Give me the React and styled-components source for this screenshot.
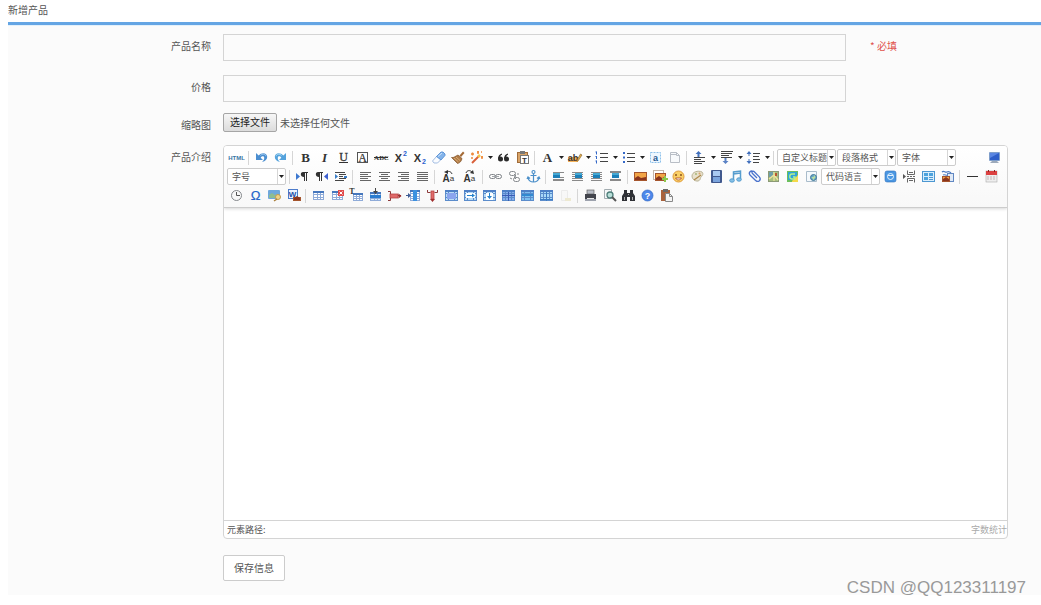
import React from "react";
import styled, { createGlobalStyle } from "styled-components";

const GlobalStyle = createGlobalStyle`
  * { box-sizing: border-box; }
  body {
    margin: 0;
    background: #fff;
    color: #555;
    font: 10px/16px "Noto Sans CJK SC", "Liberation Sans", sans-serif;
  }
  button, input, select, textarea { font: inherit; color: inherit; }
`;

const Page = styled.main`
  padding: 0 0 11px 8px;
`;

const Title = styled.h1`
  margin: 0;
  height: 22px;
  padding-top: 2px;
  font-size: 10px;
  font-weight: 400;
  line-height: 16px;
`;

const Panel = styled.form`
  position: relative;
  padding: 9px 33px 14px 0;
  background: #fbfbfb;
  border-top: 3px solid #64a5e4;
  box-shadow: inset 0 1px 0 #e3f1fb;
`;

const Row = styled.div`
  display: grid;
  grid-template-columns: 203px minmax(0, 1fr) 138px;
  column-gap: 12px;
  margin-bottom: ${(p) => p.$gap ?? 14}px;
`;

const Label = styled.label`
  padding-top: 4px;
  text-align: right;
`;

const TextInput = styled.input`
  width: 100%;
  height: 27px;
  padding: 0 6px;
  background: #fbfbfb;
  border: 1px solid #d4d4d4;
`;

const Required = styled.span`
  padding-top: 4px;
  color: #e0524c;
`;

const FieldCell = styled.div`
  margin-right: 12px;
`;

const FilePicker = styled.div`
  display: flex;
  align-items: center;
  gap: 3px;
  height: 19px;
`;

const HiddenFile = styled.input`
  position: absolute;
  width: 1px;
  height: 1px;
  opacity: 0;
`;

const FileButton = styled.label`
  width: 54px;
  height: 19px;
  border: 1px solid #a5a5a5;
  border-radius: 2px;
  background: linear-gradient(#f6f6f6, #dcdcdc);
  color: #222;
  line-height: 16px;
  text-align: center;
`;

const Editor = styled.section`
  grid-column: 2 / 4;
  overflow: hidden;
  border: 1px solid #d4d4d4;
  border-radius: 4px;
  background: #fff;
`;

const Toolbar = styled.div`
  padding: 2px 3px;
  border-bottom: 1px solid #ccc;
  background: linear-gradient(#fff, #f8f8f8);
  box-shadow: 0 1px 3px rgba(0, 0, 0, 0.16);
`;

const ToolRow = styled.div`
  display: flex;
  align-items: center;
  height: 19px;
`;

const ToolButton = styled.button`
  flex: none;
  display: flex;
  justify-content: center;
  align-items: center;
  width: ${(p) => (p.$wide ? 21 : 19)}px;
  height: 19px;
  padding: 0;
  border: 0;
  background: none;
  opacity: ${(p) => (p.disabled ? 0.6 : 1)};
  margin-left: ${(p) => (p.$end ? "auto" : 0)};
`;

const MenuArrow = styled.button`
  flex: none;
  display: flex;
  justify-content: center;
  align-items: center;
  width: 8px;
  height: 19px;
  padding: 0;
  border: 0;
  background: none;
`;

const Separator = styled.span`
  flex: none;
  width: 1px;
  height: 14px;
  margin: 0 3px 0 2px;
  background: #d6d6d6;
`;

const Combo = styled.span`
  flex: none;
  display: flex;
  width: 59px;
  height: 17px;
  margin-right: 1px;
  border: 1px solid #ccc;
  border-radius: 2px;
  background: #fff;
`;

const ComboSelect = styled.select`
  appearance: none;
  flex: 1;
  min-width: 0;
  padding: 0 0 0 4px;
  border: 0;
  background: none;
  font-size: 9px;
  line-height: 14px;
`;

const ComboArrow = styled.span`
  display: flex;
  justify-content: center;
  align-items: center;
  width: 8px;
  border-left: 1px solid #d6d6d6;
  pointer-events: none;
`;

const Content = styled.textarea`
  display: block;
  width: 100%;
  height: 312px;
  padding: 8px;
  border: 0;
  background: transparent;
  resize: none;
`;

const StatusBar = styled.div`
  display: flex;
  justify-content: space-between;
  height: 18px;
  padding: 0 0 0 3px;
  border-top: 1px solid #d4d4d4;
  font-size: 9px;
  line-height: 17px;
`;

const WordCount = styled.span`
  color: #aaa;
`;

const SaveButton = styled.button`
  grid-column: 2;
  justify-self: start;
  width: 62px;
  height: 26px;
  padding: 0;
  border: 1px solid #ccc;
  border-radius: 2px;
  background: #fff;
`;

const Watermark = styled.span`
  position: absolute;
  right: 15px;
  bottom: -3px;
  color: #999;
  font: 17px/20px "Liberation Sans", sans-serif;
`;

/* ---------- icon building blocks ---------- */

const Svg = styled.svg`
  display: block;
  width: 17px;
  height: 17px;
`;

const Caret = () => (
  <svg width="5" height="3" viewBox="0 0 5 3" aria-hidden="true">
    <path d="M0 0h5L2.5 3z" fill="#222" />
  </svg>
);

const Glyph = ({ x = 8.5, y = 13, size = 12, serif, children, ...rest }) => (
  <text
    x={x}
    y={y}
    fontSize={size}
    textAnchor="middle"
    fill="#333"
    fontWeight="700"
    fontFamily={serif ? "Liberation Serif, serif" : "Liberation Sans, sans-serif"}
    {...rest}
  >
    {children}
  </text>
);

const Bars = ({ list, color = "#666" }) =>
  list.map(([x, y, w], i) => <rect key={i} x={x} y={y} width={w} height="1" fill={color} />);

const Table = ({ x = 3, y = 4, w = 11, h = 9, v = [4, 7], r = [3, 6], fill = "#fff", line = "#8fabd8", head = "#4677bd" }) => (
  <g>
    <rect x={x + 0.5} y={y + 0.5} width={w - 1} height={h - 1} fill={fill} stroke={line} />
    {v.map((i) => <rect key={"v" + i} x={x + i} y={y} width="1" height={h} fill={line} />)}
    {r.map((i) => <rect key={"r" + i} x={x} y={y + i} width={w} height="1" fill={line} />)}
    <rect x={x} y={y} width={w} height="2" fill={head} />
  </g>
);

const BlueTable = ({ children, fill = "#b9dcf5" }) => (
  <g>
    <Table x={2} y={3} w={13} h={11} v={[3, 9]} r={[3, 7]} fill={fill} line="#5b8ccb" head="#4d7fc6" />
    {children}
  </g>
);

const Photo = ({ x, y, w, h }) => (
  <g>
    <rect x={x} y={y} width={w} height={h} fill="#a5552d" />
    <rect x={x + 1} y={y + 1} width={w - 2} height={h - 2} fill="#f2a547" />
    <path d={`M${x + 1} ${y + h - 1}v-2l3-2 3 2 ${w - 8}-1v3z`} fill="#8a341d" />
  </g>
);

const Wrap = ({ x, lines }) => (
  <g>
    <Bars list={lines} color="#8a8a8a" />
    <rect x={x} y="5" width="7" height="5" fill="#1c7fb8" />
    <rect x={x} y="5" width="7" height="2" fill="#45a9d4" />
  </g>
);

const icons = {
  html: <Glyph y={10.5} size={6} fill="#3875a5">HTML</Glyph>,
  undo: (
    <g>
      <path d="M3 4v7h7L7.700 8.800C9 6.800 11 7 11.200 8.800c.2 1.700-.8 3-2.200 4.200 3.500-.6 5.300-2.800 5.200-5.300C14 4 9 2.500 5.700 6.600z" fill="#4a8ed0" />
      <path d="M7.500 6.500c2-2.200 5-1.600 5.400.7" fill="none" stroke="#a4cdf0" />
    </g>
  ),
  redo: (
    <g>
      <path d="M14 4v7H7l2.300-2.200C8 6.800 6 7 5.800 8.800c-.2 1.700.8 3 2.200 4.200-3.500-.6-5.300-2.800-5.200-5.300C3 4 8 2.500 11.300 6.600z" fill="#54a2dc" />
      <path d="M9.500 6.500c-2-2.200-5-1.600-5.400.7" fill="none" stroke="#b4e0f6" />
    </g>
  ),
  bold: <Glyph serif size={13}>B</Glyph>,
  italic: <Glyph serif size={13} fontStyle="italic">I</Glyph>,
  underline: (
    <g>
      <Glyph serif size={12} y={12} fontWeight="400" stroke="#333" strokeWidth=".3">U</Glyph>
      <rect x="4" y="13" width="9" height="1" fill="#333" />
    </g>
  ),
  fontborder: (
    <g>
      <rect x="3.500" y="3.500" width="10" height="10" fill="none" stroke="#555" />
      <Glyph serif y={12.500} size={12} fontWeight="400" stroke="#333" strokeWidth=".2">A</Glyph>
    </g>
  ),
  strike: (
    <g>
      <Glyph serif size={7} y={11}>ABC</Glyph>
      <rect x="1" y="8" width="14" height="1" fill="#333" />
    </g>
  ),
  sup: (
    <g>
      <Glyph x={6.500} size={11}>X</Glyph>
      <Glyph x={13} y={7} size={7} fill="#2a5fd0">2</Glyph>
    </g>
  ),
  sub: (
    <g>
      <Glyph x={6.500} size={11}>X</Glyph>
      <Glyph x={13} y={15} size={7} fill="#2a5fd0">2</Glyph>
    </g>
  ),
  eraser: (
    <g>
      <path d="M2.500 12L7 7l4 3.500L7.500 14H4z" fill="#fafcff" stroke="#a3bde2" />
      <path d="M6.500 7.500L11 3h2l2 2v1.500L11 11z" fill="#84b4ea" stroke="#4a86d0" strokeWidth=".8" />
      <path d="M8 7.500L12 4" stroke="#cfe4fa" />
    </g>
  ),
  brush: (
    <g>
      <path d="M10.500 6.500L14 2.500l1.500 1.500-3.500 4z" fill="#a46a36" />
      <path d="M2.500 8.500c2.500.5 4-1.500 6.500-2.500l4 3.500c-.5 2.500-2 4.500-4.500 5z" fill="#b07a45" stroke="#80512a" strokeWidth=".7" />
      <path d="M5 9l4.500 4M7 8l4 3.500" stroke="#e3bb86" strokeWidth=".8" />
    </g>
  ),
  autotype: (
    <g>
      <path d="M4 14l7-7" stroke="#d9603a" strokeWidth="2" />
      <path d="M10 8l2-2" stroke="#f4c64a" strokeWidth="2.500" />
      <path d="M3 5h3M4.500 3.500v3M9 3h2M10 2v3M13 8h2M14 7v3M13 3h1M3 9h2" stroke="#ee8a3c" strokeWidth="1.500" />
    </g>
  ),
  quote: (
    <g fill="#2c2c2c">
      <circle cx="5.500" cy="10" r="2.500" />
      <circle cx="11.500" cy="10" r="2.500" />
      <path d="M3 10c0-3 1.500-5 4-5.500v1.200C5.500 6.300 5 7.300 5 9zM9 10c0-3 1.500-5 4-5.500v1.200c-1.500.6-2 1.600-2 3.300z" />
    </g>
  ),
  pasteText: (
    <g>
      <rect x="3.500" y="3.500" width="10" height="10" fill="#d9a468" stroke="#a06c3a" />
      <rect x="6" y="2" width="5" height="3" fill="#777" />
      <rect x="6.500" y="6.500" width="8" height="8" fill="#fff" stroke="#777" />
      <Glyph x={10.500} y={13.500} size={8}>T</Glyph>
    </g>
  ),
  color: <Glyph serif size={13} y={13}>A</Glyph>,
  highlight: (
    <g>
      <rect x="2" y="8" width="10" height="5" fill="#f6b45a" />
      <Glyph x={7} y={12} size={9}>ab</Glyph>
      <path d="M10.500 12l4-7 1.500 1-4 6z" fill="#e8b34d" stroke="#7d5721" strokeWidth=".6" />
    </g>
  ),
  ol: (
    <g>
      <path d="M3.500 2.500v3M3.500 7v3M3.500 11.500v3M2.500 3h1M2.500 7.500h1M2.500 12h1" stroke="#3569c8" />
      <Bars list={[[7, 4, 8], [7, 8, 8], [7, 12, 8]]} color="#444" />
    </g>
  ),
  ul: (
    <g>
      <path d="M3 3h2v2H3zM3 7.500h2v2H3zM3 12h2v2H3z" fill="#3569c8" />
      <Bars list={[[7, 4, 8], [7, 8, 8], [7, 12, 8]]} color="#444" />
    </g>
  ),
  selectAll: (
    <g>
      <rect x="3.500" y="3.500" width="10" height="10" fill="#eef7ff" stroke="#8cc0ea" strokeDasharray="2 1" />
      <Glyph y={11.500} size={9} fill="#24568f">a</Glyph>
    </g>
  ),
  clearDoc: (
    <g stroke="#b9bec6">
      <path d="M4.500 3.500h6l3 3v7h-9z" fill="#f8fafc" />
      <path d="M10.500 3.500v3h3M4 5.500h6" fill="none" />
    </g>
  ),
  rowTop: (
    <g>
      <path d="M7.500 2l3 3h-2v3h-2v-3h-2z" fill="#4371bd" />
      <Bars list={[[3, 8, 11], [3, 10, 7], [3, 12, 11], [3, 14, 8]]} color="#444" />
    </g>
  ),
  rowBottom: (
    <g>
      <Bars list={[[3, 2, 12], [3, 4, 11], [3, 6, 8], [3, 8, 11]]} color="#444" />
      <path d="M7.500 15l3-3h-2V9h-2v3h-2z" fill="#5b82c5" />
    </g>
  ),
  lineHeight: (
    <g>
      <path d="M4 2l2.500 3h-5zM4 15l2.500-3h-5zM3.500 5h1v2h-1zM3.500 10h1v2h-1z" fill="#4371bd" />
      <Bars list={[[8, 4, 7], [8, 7, 6], [8, 10, 7], [8, 13, 6]]} color="#444" />
    </g>
  ),
  fullscreen: (
    <g>
      <rect x="3" y="3" width="11" height="9" rx="1" fill="#7f9ecb" />
      <rect x="4" y="4" width="9" height="7" fill="#2f5fc9" />
      <path d="M4 4h9L4 9z" fill="#5a86e2" />
      <path d="M6 12h5l2 2H4z" fill="#9daabb" />
    </g>
  ),
  ltr: (
    <g>
      <path d="M2 5l4 3.500L2 12z" fill="#3c78d0" />
      <path d="M8 4h6v1h-1v8h-1V5h-1v8h-1V9c-4 0-4-5-1-5z" fill="#333" />
    </g>
  ),
  rtl: (
    <g>
      <path d="M15 5l-4 3.500 4 3.500z" fill="#3c5fd0" />
      <path d="M4 4h6v1H9v8H8V5H7v8H6V9C2 9 2 4 5 4z" fill="#333" />
    </g>
  ),
  indent: (
    <g>
      <Bars list={[[3, 4, 10], [7, 6, 7], [7, 8, 4], [7, 10, 7], [3, 12, 9]]} color="#444" />
      <path d="M3 6l3 2.500L3 11zM12 8h3v2h-3z" fill="#397dc7" />
    </g>
  ),
  left: <Bars list={[[3, 4, 11], [3, 6, 8], [3, 8, 11], [3, 10, 8], [3, 12, 11]]} />,
  center: <Bars list={[[3, 4, 11], [5, 6, 7], [3, 8, 11], [5, 10, 7], [3, 12, 11]]} />,
  right: <Bars list={[[3, 4, 11], [6, 6, 8], [3, 8, 11], [6, 10, 8], [3, 12, 11]]} />,
  justify: <Bars list={[[3, 4, 11], [3, 6, 11], [3, 8, 11], [3, 10, 11], [3, 12, 11]]} />,
  upper: (
    <g>
      <Glyph x={6} y={14} size={10}>A</Glyph>
      <Glyph x={12} y={13} size={8} fontWeight="400">a</Glyph>
      <path d="M12 6C11 3 8 3 6 4" fill="none" stroke="#333" />
      <path d="M4 4l4-2v4z" fill="#333" />
    </g>
  ),
  lower: (
    <g>
      <Glyph x={6} y={14} size={10}>A</Glyph>
      <Glyph x={12} y={13} size={8} fontWeight="400">a</Glyph>
      <path d="M5 5c1-3 4-3 6-1" fill="none" stroke="#333" />
      <path d="M13 6L9 5l3-3z" fill="#333" />
    </g>
  ),
  link: (
    <g fill="none" stroke="#7d8186">
      <rect x="2.500" y="6.500" width="6" height="4" rx="2" />
      <rect x="8.500" y="6.500" width="6" height="4" rx="2" />
      <path d="M5 8.500h7" stroke="#a2a6aa" />
    </g>
  ),
  unlink: (
    <g fill="none" stroke="#85898d">
      <rect x="3.500" y="3.500" width="6" height="4" rx="2" />
      <rect x="7.500" y="9.500" width="6" height="4" rx="2" />
      <path d="M8 6l2 2-2 1 2 2M4 10l2 1M12 5v2" />
    </g>
  ),
  anchor: (
    <g fill="none" stroke="#4b8fc9" strokeWidth="1.200">
      <circle cx="8.500" cy="4" r="1.500" />
      <path d="M8.500 5.500V14M5.500 7.500h6M3 9.500c.5 3 2.500 4.500 5.500 4.500s5-1.500 5.500-4.500M2 11l1-2 2 1.500M15 11l-1-2-2 1.500" />
    </g>
  ),
  wrapNone: <Wrap x={3} lines={[[3, 4, 11], [10, 9, 4], [3, 11, 11], [3, 12, 11]]} />,
  wrapLeft: <Wrap x={6} lines={[[3, 4, 11], [3, 6, 11], [3, 8, 11], [3, 10, 11], [3, 12, 11]]} />,
  wrapRight: <Wrap x={5} lines={[[3, 4, 11], [3, 6, 11], [3, 8, 11], [3, 10, 11], [3, 12, 11]]} />,
  wrapCenter: <Wrap x={5} lines={[[3, 3, 11], [3, 4, 11], [3, 11, 11], [3, 12, 11]]} />,
  image: <Photo x={2} y={4} w={13} h={9} />,
  images: (
    <g>
      <rect x="2.500" y="2.500" width="10" height="9" fill="#fff" stroke="#c5b6aa" />
      <Photo x={4} y={5} w={11} h={8} />
      <path d="M11 10h2V8h2v2h2v2h-2v2h-2v-2h-2z" fill="#8dc94c" />
    </g>
  ),
  smile: (
    <g>
      <circle cx="8.500" cy="8.500" r="5.500" fill="#fad067" stroke="#e09a3a" />
      <path d="M6 6v2M11 6v2" stroke="#7c4110" strokeWidth="1.300" />
      <path d="M5.500 10c1.500 2.600 4.500 2.600 6 0z" fill="#fff" stroke="#a9441e" strokeWidth=".8" />
    </g>
  ),
  palette: (
    <g>
      <path d="M3 8c0-4 6-6 10-4 2 2 0 4-1 5s0 3-3 4c-3 .5-6-2-6-5z" fill="#e8e1cc" stroke="#b9b294" />
      <circle cx="7" cy="6" r="1" fill="#a9b77a" />
      <circle cx="10.500" cy="5.500" r="1" fill="#d9a36c" />
      <path d="M5 12l7-5" stroke="#b08a4d" strokeWidth="1.300" />
    </g>
  ),
  video: (
    <g>
      <rect x="3" y="2" width="11" height="13" rx="1" fill="#41598e" />
      <rect x="5" y="3" width="7" height="5" fill="#a9c9f1" />
      <rect x="5" y="9" width="7" height="5" fill="#7ba4dd" />
    </g>
  ),
  music: (
    <g>
      <path d="M6.500 12V4l7-1v8M6.500 6l7-1" fill="none" stroke="#579dce" strokeWidth="1.500" />
      <ellipse cx="5" cy="12.500" rx="2.300" ry="1.700" fill="#86c1e8" stroke="#579dce" />
      <ellipse cx="12" cy="11.500" rx="2.300" ry="1.700" fill="#86c1e8" stroke="#579dce" />
    </g>
  ),
  attach: (
    <path d="M11 10L6.500 5.500c-1.500-1.500.5-3 1.800-1.800l5 5.200c2.500 3-1 6-3.700 3.500L4 7c-2-2.500 1-5 3-3.500" fill="none" stroke="#4b73cc" strokeWidth="1.300" />
  ),
  map: (
    <g>
      <rect x="3.500" y="3.500" width="10" height="10" fill="#a5bf80" stroke="#8c9a76" />
      <path d="M4 4h4v5H4z" fill="#6f9fa8" />
      <path d="M4 11l5-4 4 5M9 4v9" fill="none" stroke="#efe39a" strokeWidth="1.300" />
      <path d="M10 5h2v3h-2z" fill="#b85632" />
    </g>
  ),
  gmap: (
    <g>
      <rect x="3" y="3" width="11" height="11" fill="#6cbf5e" />
      <path d="M4 4h9v8H4z" fill="#2fa5d8" />
      <path d="M8 13l6-6v7H8z" fill="#f4d94a" />
      <path d="M11 6H8c-3 0-3 5 0 5h3V9H9" fill="none" stroke="#b9f08a" strokeWidth="1.300" />
    </g>
  ),
  frame: (
    <g>
      <path d="M3.500 3.500h10v10h-10z" fill="#f5f9fc" stroke="#a9bccb" />
      <circle cx="10.500" cy="9.500" r="3" fill="#6aa5c8" stroke="#417999" />
      <path d="M8.500 9h2l1-2 1 2-2 3z" fill="#b9df9f" />
    </g>
  ),
  webapp: (
    <g>
      <rect x="3" y="3" width="11" height="11" rx="2" fill="#4b97e2" stroke="#2d6fbe" strokeWidth=".6" />
      <circle cx="8.500" cy="8.500" r="3" fill="#4b97e2" stroke="#e4f3ff" />
      <path d="M6 7.500h5" stroke="#e4f3ff" />
    </g>
  ),
  pagebreak: (
    <g fill="none" stroke="#666">
      <path d="M6.500 2.500v4h7v-4M6.500 14.500v-4h7v4M8 4.500h4M8 12.500h4" />
      <path d="M6 8.500h9" strokeDasharray="2 1" />
      <path d="M2 6l3 2.500L2 11z" fill="#555" stroke="none" />
    </g>
  ),
  template: (
    <g>
      <rect x="2.500" y="3.500" width="12" height="10" fill="#d9eefc" stroke="#4c97d1" />
      <path d="M4 5h4v3H4zM4 9h4v3H4zM9 5h4v3H9z" fill="#4da3dd" />
      <path d="M9 9.500h4M9 11.500h4" stroke="#4c97d1" />
    </g>
  ),
  background: (
    <g>
      <path d="M3 4c2-2 3 1 5 0s3 0 4 1M4 7c2-1 3 1 5 0" fill="none" stroke="#4d7bc2" strokeWidth="1.200" />
      <rect x="8.500" y="5.500" width="6" height="8" fill="#dfe9f6" stroke="#6188c2" />
      <Photo x={3} y={8} w={8} h={6} />
    </g>
  ),
  hr: <rect x="3" y="8" width="11" height="1" fill="#333" />,
  date: (
    <g>
      <rect x="3" y="3" width="11" height="11" fill="#eee" stroke="#aaa" strokeWidth=".6" />
      <rect x="3" y="3" width="11" height="4" fill="#dc4141" />
      <path d="M5.500 2v2M11.500 2v2" stroke="#8e2222" />
      <path d="M4 9h9M4 11h9" stroke="#c4b7b7" strokeDasharray="2 1" />
    </g>
  ),
  time: (
    <g fill="none" stroke="#85888c">
      <circle cx="8.500" cy="8.500" r="5" fill="#f8f8f8" />
      <path d="M8.500 5v3.500H12" stroke="#555" />
    </g>
  ),
  omega: <Glyph size={13} fontWeight="400" fill="#2565c9" stroke="#2565c9" strokeWidth=".2">Ω</Glyph>,
  snapshot: (
    <g>
      <rect x="2" y="3" width="12" height="9" rx="1" fill="#6fa8dc" />
      <path d="M3 11V8l3-2 3 2 3-1v4z" fill="#8dbd93" />
      <circle cx="12" cy="10" r="2.500" fill="#f0d489" stroke="#c49a51" />
      <path d="M11 12l-3 2" stroke="#ad8341" strokeWidth="1.500" />
    </g>
  ),
  word: (
    <g>
      <rect x="3.500" y="2.500" width="9" height="9" fill="#eaf2ff" stroke="#4d7ccb" />
      <Glyph x={7.500} y={10} size={8} fill="#214fa8">W</Glyph>
      <Photo x={8} y={10} w={8} h={4} />
    </g>
  ),
  table: <Table />,
  tableDelete: (
    <g>
      <Table />
      <rect x="9" y="3" width="6" height="6" fill="#e14b4b" />
      <path d="M10.500 4.500l3 3M13.500 4.500l-3 3" stroke="#fff" />
    </g>
  ),
  tableTitle: (
    <g>
      <Table x={5} y={6} w={10} h={8} v={[3, 6]} r={[3, 5]} />
      <Glyph x={4} y={7} size={8} serif>T</Glyph>
    </g>
  ),
  rowInsert: (
    <g>
      <Table x={3} y={5} w={11} h={9} fill="#dcedfb" />
      <rect x="3" y="8" width="11" height="3" fill="#2b7ccf" />
      <path d="M8 1h1v3h2L8.500 7 6 4h2z" fill="#444" />
    </g>
  ),
  rowDelete: (
    <g>
      <rect x="4" y="7" width="8" height="4" fill="#e06a6a" stroke="#b84444" strokeWidth=".8" />
      <path d="M2 4.500h2.500v2.500M2 13.500h2.500V11M12 8.500h3" stroke="#8c3a3a" fill="none" />
      <path d="M12.500 6.500L15.500 9l-3 2.500z" fill="#9f2d2d" />
    </g>
  ),
  colInsert: (
    <g>
      <Table x={5} y={3} w={10} h={11} v={[3, 6]} r={[3, 6, 8]} />
      <rect x="8" y="3" width="4" height="11" fill="#3c91df" />
      <path d="M1 8h2V6l3 2.500L3 11V9H1z" fill="#3d5b94" />
    </g>
  ),
  colDelete: (
    <g>
      <rect x="7" y="4" width="3" height="8" fill="#e06a6a" stroke="#b84444" strokeWidth=".8" />
      <path d="M3.500 3v2.500H6.500M13.500 3v2.500h-3" stroke="#8c3a3a" fill="none" />
      <path d="M6 12h5l-2.500 3z" fill="#9f2d2d" />
    </g>
  ),
  mergeCells: <BlueTable><rect x="4" y="6" width="9" height="6" fill="#8aa5ee" /></BlueTable>,
  mergeRight: <BlueTable><rect x="4" y="6" width="9" height="5" fill="#fff" /><path d="M5 8h5V6.500l3 2-3 2V9H5z" fill="#2783cc" /></BlueTable>,
  mergeDown: <BlueTable><rect x="5" y="6" width="7" height="7" fill="#fff" /><path d="M8 6h1v3h2l-2.500 3L6 9h2z" fill="#2783cc" /></BlueTable>,
  splitRows: <BlueTable fill="#88aeed"><path d="M8.500 5v9M2 8.500h13" stroke="#3a5cb4" /></BlueTable>,
  splitCols: <BlueTable fill="#7cc0f0"><rect x="3" y="7" width="11" height="2" fill="#3189d0" /></BlueTable>,
  splitCells: <BlueTable fill="#a9d8f8"><path d="M8.500 5v9M2 12.500h13" stroke="#3b7cc4" /></BlueTable>,
  chart: (
    <g>
      <path d="M4.500 3.500h6v10h-6z" fill="#f7f7f7" stroke="#e2e2e2" />
      <path d="M8 11h6v3H8z" fill="#e6e0b8" />
    </g>
  ),
  print: (
    <g>
      <rect x="5" y="3" width="7" height="4" fill="#b9bdc6" stroke="#666" strokeWidth=".7" />
      <path d="M3 7h11v5H3z" fill="#42444c" />
      <path d="M3 12h11v2H3z" fill="#9da2ad" />
      <path d="M5 11.500h7" stroke="#e8e8e8" />
    </g>
  ),
  preview: (
    <g>
      <path d="M3.500 2.500h7v9h-7z" fill="#f5f7f8" stroke="#a3acb0" />
      <circle cx="9" cy="8" r="3" fill="#b9dfd8" stroke="#4d7d79" strokeWidth="1.300" />
      <path d="M11 10l4 4" stroke="#555" strokeWidth="2" />
    </g>
  ),
  search: (
    <g fill="#2f3136">
      <path d="M4 3h3v3h3V3h3v3l2 3v5h-5v-4H7v4H2V9l2-3z" />
      <path d="M4 10h1v3H4zM12 10h1v3h-1zM8 7h1v1H8z" fill="#aaa" />
    </g>
  ),
  help: (
    <g>
      <circle cx="8.500" cy="8.500" r="5.500" fill="#4d88ea" stroke="#2f65c4" strokeWidth=".7" />
      <Glyph y={12} size={9} fill="#fff">?</Glyph>
    </g>
  ),
  draft: (
    <g>
      <rect x="3" y="3" width="9" height="11" fill="#a8623d" />
      <rect x="5" y="2" width="5" height="3" fill="#6a6a6a" />
      <path d="M7.500 6.500h4l3 3v5h-7z" fill="#f4f4f4" stroke="#888" />
      <path d="M11.500 6.500v3h3" fill="none" stroke="#888" />
    </g>
  ),
};

/* ---------- toolbar contents ---------- */

const SEP = "|";
const tool = (icon, label, extra = {}) => ({ icon, label, ...extra });
const menu = (icon, label) => tool(icon, label, { menu: true });
const combo = (label) => ({ combo: label });

const rows = [
  [
    tool("html", "源代码"), SEP, tool("undo", "撤销"), tool("redo", "重做"), SEP,
    tool("bold", "加粗"), tool("italic", "斜体"), tool("underline", "下划线"), tool("fontborder", "字符边框"),
    tool("strike", "删除线"), tool("sup", "上标"), tool("sub", "下标"), tool("eraser", "清除格式"),
    tool("brush", "格式刷"), menu("autotype", "自动排版"), tool("quote", "引用"), tool("pasteText", "纯文本粘贴模式"), SEP,
    menu("color", "字体颜色"), menu("highlight", "背景色"), menu("ol", "有序列表"), menu("ul", "无序列表"),
    tool("selectAll", "全选"), tool("clearDoc", "清空文档"), SEP,
    menu("rowTop", "段前距"), menu("rowBottom", "段后距"), menu("lineHeight", "行间距"), SEP,
    combo("自定义标题"), combo("段落格式"), combo("字体"), tool("fullscreen", "全屏", { end: true }),
  ],
  [
    combo("字号"), SEP, tool("ltr", "从左向右输入"), tool("rtl", "从右向左输入"), tool("indent", "首行缩进"), SEP,
    tool("left", "居左对齐"), tool("center", "居中对齐"), tool("right", "居右对齐"), tool("justify", "两端对齐"), SEP,
    tool("upper", "字母大写", { wide: true }), tool("lower", "字母小写", { wide: true }), SEP,
    tool("link", "超链接"), tool("unlink", "取消链接"), tool("anchor", "锚点"), SEP,
    tool("wrapNone", "默认"), tool("wrapLeft", "左浮动"), tool("wrapRight", "右浮动"), tool("wrapCenter", "居中"), SEP,
    tool("image", "单图上传"), tool("images", "多图上传"), tool("smile", "表情"), tool("palette", "涂鸦"),
    tool("video", "视频"), tool("music", "音乐"), tool("attach", "附件"), tool("map", "地图"),
    tool("gmap", "谷歌地图"), tool("frame", "插入框架"), combo("代码语言"), tool("webapp", "应用"),
    tool("pagebreak", "分页"), tool("template", "模板"), tool("background", "背景"), SEP,
    tool("hr", "分隔线"), tool("date", "日期"),
  ],
  [
    tool("time", "时间"), tool("omega", "特殊字符"), tool("snapshot", "截图"), tool("word", "图片转存"), SEP,
    tool("table", "插入表格"), tool("tableDelete", "删除表格"), tool("tableTitle", "表格标题"), tool("rowInsert", "前插入行"),
    tool("rowDelete", "删除行"), tool("colInsert", "前插入列"), tool("colDelete", "删除列"), tool("mergeCells", "合并单元格"),
    tool("mergeRight", "右合并单元格"), tool("mergeDown", "下合并单元格"), tool("splitRows", "拆分成行"),
    tool("splitCols", "拆分成列"), tool("splitCells", "完全拆分单元格"), tool("chart", "图表", { off: true }), SEP,
    tool("print", "打印"), tool("preview", "预览"), tool("search", "查询替换"), tool("help", "帮助"), tool("draft", "从草稿箱加载"),
  ],
];

const Item = ({ item }) => {
  if (item === SEP) return <Separator />;
  if (item.combo) {
    return (
      <Combo>
        <ComboSelect aria-label={item.combo}>
          <option>{item.combo}</option>
        </ComboSelect>
        <ComboArrow><Caret /></ComboArrow>
      </Combo>
    );
  }
  return (
    <>
      <ToolButton type="button" aria-label={item.label} $wide={item.wide} $end={item.end} disabled={item.off}>
        <Svg viewBox="0 0 17 17" aria-hidden="true">{icons[item.icon]}</Svg>
      </ToolButton>
      {item.menu && (
        <MenuArrow type="button" aria-label={item.label + "选项"}><Caret /></MenuArrow>
      )}
    </>
  );
};

export default function App() {
  return (
    <Page>
      <GlobalStyle />
      <Title>新增产品</Title>
      <Panel onSubmit={(e) => e.preventDefault()}>
        <Row>
          <Label htmlFor="name">产品名称</Label>
          <FieldCell><TextInput id="name" type="text" required /></FieldCell>
          <Required>* 必填</Required>
        </Row>
        <Row $gap={11}>
          <Label htmlFor="price">价格</Label>
          <FieldCell><TextInput id="price" type="text" /></FieldCell>
        </Row>
        <Row $gap={12}>
          <Label htmlFor="thumb">缩略图</Label>
          <FilePicker>
            <HiddenFile id="thumb" type="file" />
            <FileButton htmlFor="thumb">选择文件</FileButton>
            <span>未选择任何文件</span>
          </FilePicker>
        </Row>
        <Row $gap={16}>
          <Label htmlFor="intro">产品介绍</Label>
          <Editor>
            <Toolbar role="toolbar">
              {rows.map((items, r) => (
                <ToolRow key={r}>
                  {items.map((item, i) => <Item key={i} item={item} />)}
                </ToolRow>
              ))}
            </Toolbar>
            <Content id="intro" />
            <StatusBar>
              <span>元素路径:</span>
              <WordCount>字数统计</WordCount>
            </StatusBar>
          </Editor>
        </Row>
        <Row $gap={0}>
          <SaveButton type="submit">保存信息</SaveButton>
        </Row>
        <Watermark>CSDN @QQ123311197</Watermark>
      </Panel>
    </Page>
  );
}
